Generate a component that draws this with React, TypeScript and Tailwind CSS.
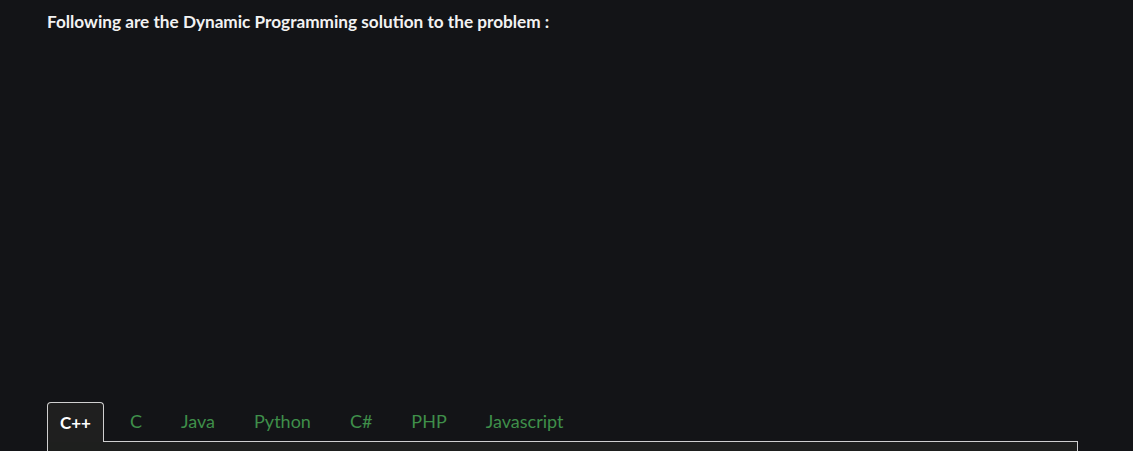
const tabs = ['C++', 'C', 'Java', 'Python', 'C#', 'PHP', 'Javascript'];

export default function App() {
  return (
    <div
      className="min-h-[451px] w-full bg-[#131417] pl-[47px] pr-[55px] pt-[10px]"
      style={{ fontFamily: 'Lato, "Noto Sans", sans-serif' }}
    >
      <p className="text-[17.2px] font-bold leading-[23px] text-[#f2f2f2]">
        Following are the Dynamic Programming solution to the problem :
      </p>

      <div className="mt-[369px]">
        <div className="flex items-end gap-[13px] border-b border-[#d0d0d0]">
          {tabs.map((t, i) =>
            i === 0 ? (
              <div
                key={t}
                className="-mb-px flex h-[40px] items-center rounded-t-[4px] border border-b-0 border-[#d0d0d0] bg-[#1f1f1f] px-[12px] text-[17px] font-bold text-white"
              >
                {t}
              </div>
            ) : (
              <div key={t} className="flex h-[39px] items-center px-[13px] text-[18px] text-[#3f8f4a]">
                {t}
              </div>
            )
          )}
        </div>
        <div className="h-[20px] border-x border-[#d0d0d0] bg-[#1e1f1e]" />
      </div>
    </div>
  );
}
